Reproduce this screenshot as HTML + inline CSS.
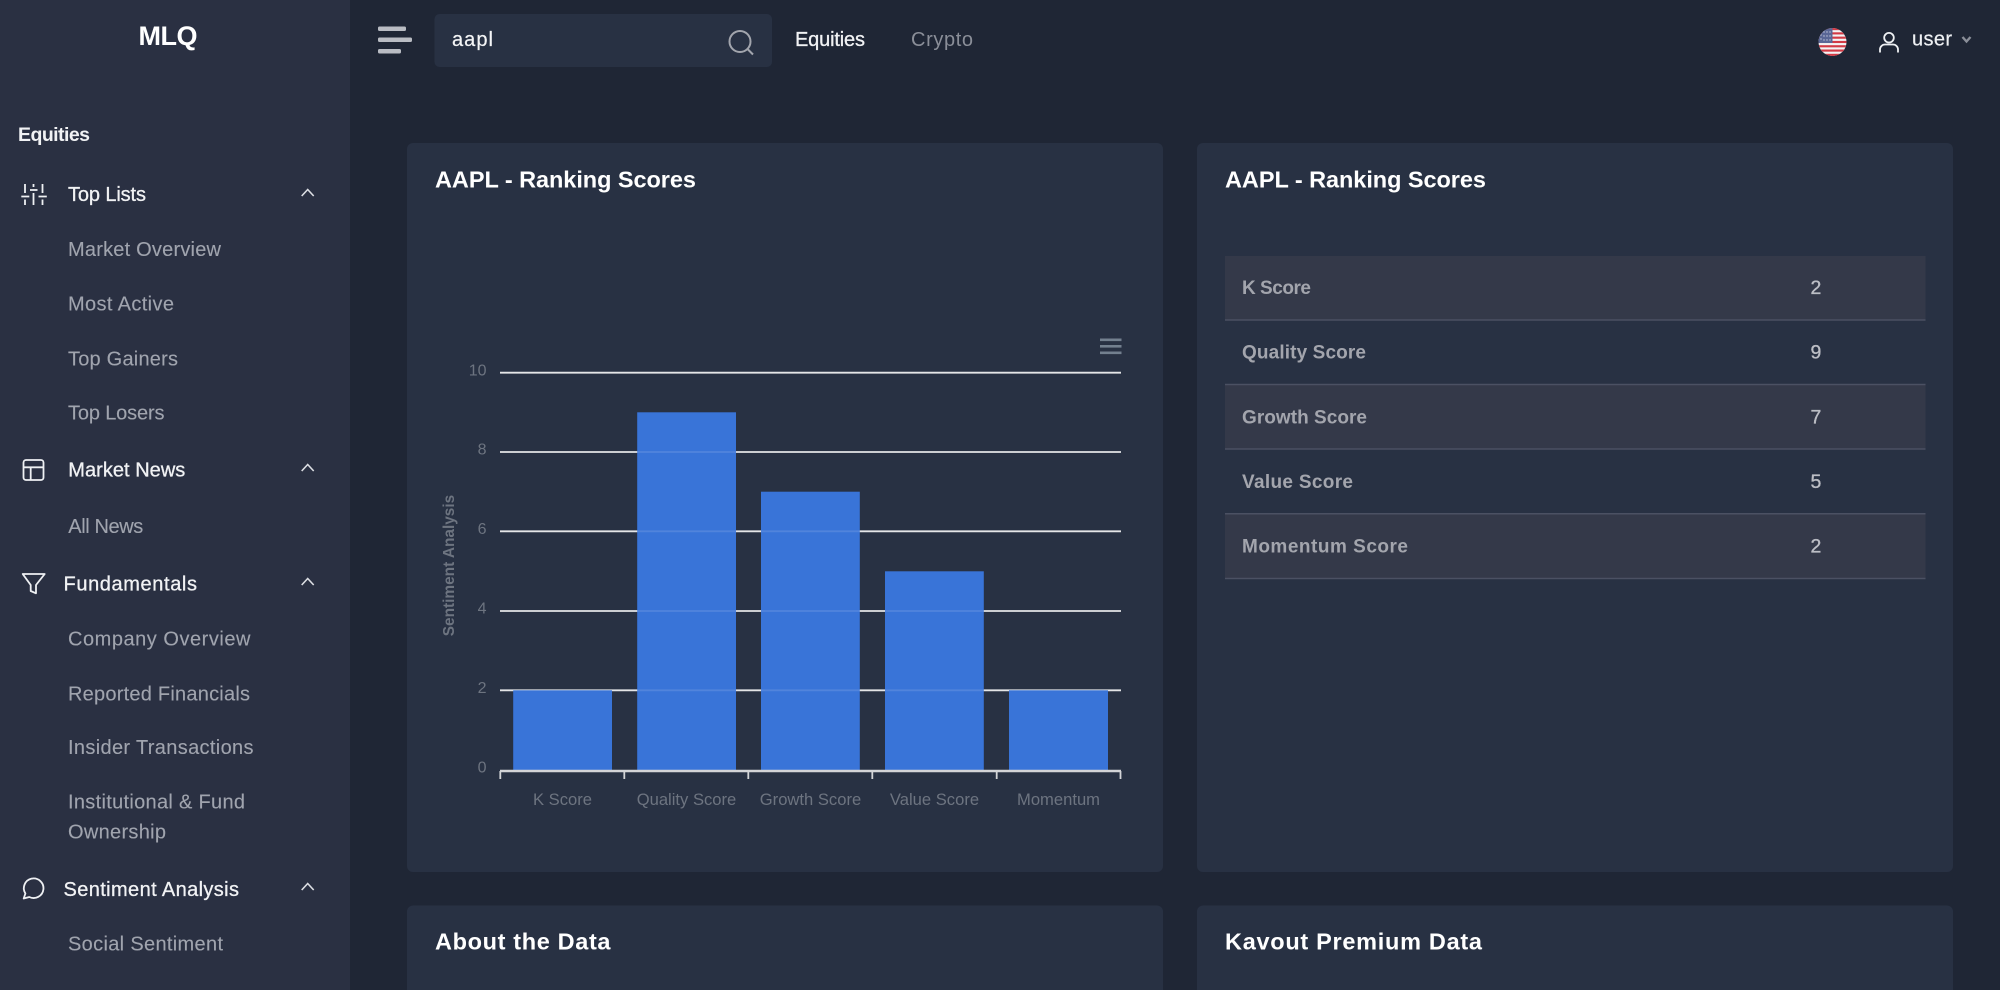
<!DOCTYPE html>
<html lang="en">
<head>
<meta charset="utf-8">
<title>MLQ - AAPL Ranking Scores</title>
<style>
html,body{margin:0;padding:0;width:2000px;height:990px;overflow:hidden;background:#1f2635}
svg{display:block}
text{font-family:"Liberation Sans",sans-serif}
.nav{font-size:20px;fill:#f1f2f4;stroke:#f1f2f4;stroke-width:.3}
.sub{font-size:20px;fill:#a0a4ae;stroke:#a0a4ae;stroke-width:.12}
.title{font-size:23.5px;font-weight:700;fill:#fff}
.td{font-size:19px;font-weight:700;fill:#a3a5ad}
.tv{font-size:19.5px;fill:#bcbec5;stroke:#bcbec5;stroke-width:.35}
.yl{font-size:16px;fill:#6d7480}
.xl{font-size:16.6px;fill:#6d7480;text-anchor:middle}
</style>
</head>
<body>
<svg width="2000" height="990" viewBox="0 0 2000 990" xmlns="http://www.w3.org/2000/svg">
  <defs>
    <clipPath id="fc"><circle cx="1832.5" cy="42" r="14"/></clipPath>
  </defs>
  <rect width="2000" height="990" fill="#1f2635"/>

  <!-- Sidebar -->
  <rect width="350" height="990" fill="#2a3042"/>
  <text x="138.5" y="45" font-size="27" font-weight="700" fill="#fff" textLength="59">MLQ</text>
  <text x="18" y="141" font-size="19.5" font-weight="700" fill="#f1f2f4" textLength="72">Equities</text>

  <g fill="none" stroke="#eef0f3" stroke-width="1.8">
    <path d="M25 184v9M25 199.5v5.5M21.3 196.5h8M33.5 184v3M33.5 193v12M30 190h7.5M42.5 184v9M42.5 199.5v5.5M38.5 196.5h8.300"/>
    <rect x="23.500" y="460" width="20" height="20" rx="2.500"/>
    <path d="M23.500 467.300h20M30.700 467.300V480"/>
    <path d="M22.700 574H44.700L36 585V593.300L30.700 591V585Z" stroke-linejoin="round"/>
    <path d="M23.700 898.500L25.400 893.500A9.800 9.800 0 1 1 29.300 897Z" stroke-linejoin="round"/>
  </g>
  <g fill="none" stroke="#dcdee3" stroke-width="1.600">
    <path d="M301.700 196L307.700 189.500L313.700 196"/>
    <path d="M301.700 471L307.700 464.500L313.700 471"/>
    <path d="M301.700 585L307.700 578.500L313.700 585"/>
    <path d="M301.700 890L307.700 883.500L313.700 890"/>
  </g>

  <text class="nav" x="68" y="201" textLength="78">Top Lists</text>
  <text class="sub" x="68" y="256" textLength="153">Market Overview</text>
  <text class="sub" x="68" y="310.700" textLength="106">Most Active</text>
  <text class="sub" x="68" y="365.300" textLength="110">Top Gainers</text>
  <text class="sub" x="68" y="419.300" textLength="96.500">Top Losers</text>
  <text class="nav" x="68.300" y="476.700" textLength="117">Market News</text>
  <text class="sub" x="68.300" y="533" textLength="75">All News</text>
  <text class="nav" x="63.500" y="590.700" textLength="133.500">Fundamentals</text>
  <text class="sub" x="68" y="645.300" textLength="182.500">Company Overview</text>
  <text class="sub" x="68" y="700.700" textLength="182">Reported Financials</text>
  <text class="sub" x="68" y="754" textLength="185.500">Insider Transactions</text>
  <text class="sub" x="68" y="808.700" textLength="177">Institutional &amp; Fund</text>
  <text class="sub" x="68" y="838.300" textLength="98">Ownership</text>
  <text class="nav" x="63.500" y="896" textLength="175.500">Sentiment Analysis</text>
  <text class="sub" x="68" y="950.700" textLength="155">Social Sentiment</text>

  <!-- Header -->
  <g fill="#b9bcc3">
    <rect x="378" y="26.500" width="28" height="4.500" rx="1.500"/>
    <rect x="378" y="37.500" width="34" height="4.500" rx="1.500"/>
    <rect x="378" y="49" width="23" height="4.500" rx="1.500"/>
  </g>
  <rect x="434.500" y="14" width="337.500" height="53" rx="5" fill="#283143"/>
  <text x="452" y="46" font-size="20" fill="#f4f5f6" stroke="#f4f5f6" stroke-width=".2" textLength="41">aapl</text>
  <g fill="none" stroke="#a2a5ad" stroke-width="2">
    <circle cx="740" cy="41.500" r="10.500"/>
    <path d="M747.500 49L753 54.500"/>
  </g>
  <text class="nav" x="795" y="46" textLength="70">Equities</text>
  <text x="911" y="46" font-size="20" fill="#8a8e98" textLength="62">Crypto</text>

  <g clip-path="url(#fc)">
    <rect x="1818" y="28" width="29" height="28" fill="#f3f3f4"/>
    <g fill="#d23a45">
      <rect x="1818" y="28" width="29" height="2.150"/>
      <rect x="1818" y="32.300" width="29" height="2.150"/>
      <rect x="1818" y="36.600" width="29" height="2.150"/>
      <rect x="1818" y="40.900" width="29" height="2.150"/>
      <rect x="1818" y="45.200" width="29" height="2.150"/>
      <rect x="1818" y="49.500" width="29" height="2.150"/>
      <rect x="1818" y="53.800" width="29" height="2.200"/>
    </g>
    <rect x="1818" y="28" width="14.500" height="15" fill="#5a6796"/>
    <g fill="#c3c8dc">
      <circle cx="1821" cy="35" r=".7"/><circle cx="1824" cy="32" r=".7"/><circle cx="1827" cy="32" r=".7"/><circle cx="1830" cy="32" r=".7"/>
      <circle cx="1824" cy="36" r=".7"/><circle cx="1827" cy="36" r=".7"/><circle cx="1830" cy="36" r=".7"/>
      <circle cx="1821" cy="39" r=".7"/><circle cx="1824" cy="40" r=".7"/><circle cx="1827" cy="40" r=".7"/><circle cx="1830" cy="40" r=".7"/>
    </g>
  </g>
  <g fill="none" stroke="#eef0f3" stroke-width="1.800">
    <circle cx="1889" cy="37.700" r="4.800"/>
    <path d="M1880 52.500V49.500A5 5 0 0 1 1885 44.500H1893A5 5 0 0 1 1898 49.500V52.500"/>
  </g>
  <text x="1912" y="45.500" font-size="20" fill="#eef0f3" stroke="#eef0f3" stroke-width=".2" textLength="40">user</text>
  <path d="M1962.500 37L1966.500 41.500L1970.500 37" fill="none" stroke="#8a8e98" stroke-width="2.400"/>

  <!-- Cards -->
  <rect x="407" y="143" width="756" height="729" rx="6" fill="#283143"/>
  <rect x="1197" y="143" width="756" height="729" rx="6" fill="#283143"/>
  <rect x="407" y="905.500" width="756" height="100" rx="6" fill="#283143"/>
  <rect x="1197" y="905.500" width="756" height="100" rx="6" fill="#283143"/>

  <text class="title" x="435" y="187.300" textLength="261">AAPL - Ranking Scores</text>
  <text class="title" x="1225" y="187.300" textLength="261">AAPL - Ranking Scores</text>
  <text class="title" x="435" y="949.300" textLength="175.500">About the Data</text>
  <text class="title" x="1225" y="949.300" textLength="257">Kavout Premium Data</text>

  <!-- Chart -->
  <g fill="#73808f">
    <rect x="1100" y="338.500" width="21.500" height="2.600"/>
    <rect x="1100" y="345" width="21.500" height="2.600"/>
    <rect x="1100" y="351.500" width="21.500" height="2.600"/>
  </g>
  <g stroke="#e4e5e7" stroke-width="1.800">
    <path d="M500 372.700H1121M500 452H1121M500 531.300H1121M500 611H1121M500 690.300H1121"/>
  </g>
  <g fill="#3974d8">
    <rect x="513.200" y="690.300" width="98.800" height="80"/>
    <rect x="637.200" y="412.300" width="98.800" height="358"/>
    <rect x="761" y="491.700" width="98.800" height="278.600"/>
    <rect x="885" y="571.300" width="98.800" height="199"/>
    <rect x="1009" y="690.300" width="99" height="80"/>
  </g>
  <g stroke="#fff" stroke-opacity=".12" stroke-width="1.800">
    <path d="M637.200 452H736M637.200 531.300H736M761 531.300H859.800M637.200 611H736M761 611H859.800M885 611H983.800M637.200 690.300H736M761 690.300H859.800M885 690.300H983.800"/>
  </g>
  <g fill="none" stroke="#d3d4d7" stroke-width="1.800">
    <path d="M500 771H1121" stroke-width="2.400"/>
    <path d="M500.300 771V779M624.300 771V779M748.300 771V779M872.300 771V779M996.700 771V779M1120.500 771V779"/>
  </g>
  <text class="yl" x="486.500" y="375.300" text-anchor="end">10</text>
  <text class="yl" x="486.500" y="454.300" text-anchor="end">8</text>
  <text class="yl" x="486.500" y="534" text-anchor="end">6</text>
  <text class="yl" x="486.500" y="613.500" text-anchor="end">4</text>
  <text class="yl" x="486.500" y="693" text-anchor="end">2</text>
  <text class="yl" x="486.500" y="772.700" text-anchor="end">0</text>
  <text transform="translate(454 565.500) rotate(-90)" font-size="15.400" font-weight="700" fill="#6d7480" text-anchor="middle">Sentiment Analysis</text>
  <text class="xl" x="562.500" y="805">K Score</text>
  <text class="xl" x="686.500" y="805">Quality Score</text>
  <text class="xl" x="810.500" y="805">Growth Score</text>
  <text class="xl" x="934.500" y="805">Value Score</text>
  <text class="xl" x="1058.500" y="805">Momentum</text>

  <!-- Table -->
  <g fill="#343949">
    <rect x="1225" y="256" width="700.500" height="64"/>
    <rect x="1225" y="385" width="700.500" height="64"/>
    <rect x="1225" y="514.500" width="700.500" height="64"/>
  </g>
  <g stroke="#4b5163" stroke-width="1.500">
    <path d="M1225 320H1925.500M1225 384.500H1925.500M1225 449H1925.500M1225 513.800H1925.500M1225 578.500H1925.500"/>
  </g>
  <text class="td" x="1242" y="294" textLength="69">K Score</text>
  <text class="tv" x="1810.500" y="294" textLength="10.500">2</text>
  <text class="td" x="1242" y="358.700" textLength="124">Quality Score</text>
  <text class="tv" x="1810.500" y="358.700" textLength="10.500">9</text>
  <text class="td" x="1242" y="423.300" textLength="125">Growth Score</text>
  <text class="tv" x="1810.500" y="423.300" textLength="10.500">7</text>
  <text class="td" x="1242" y="488" textLength="111">Value Score</text>
  <text class="tv" x="1810.500" y="488" textLength="10.500">5</text>
  <text class="td" x="1242" y="552.700" textLength="166">Momentum Score</text>
  <text class="tv" x="1810.500" y="552.700" textLength="10.500">2</text>
</svg>
</body>
</html>
